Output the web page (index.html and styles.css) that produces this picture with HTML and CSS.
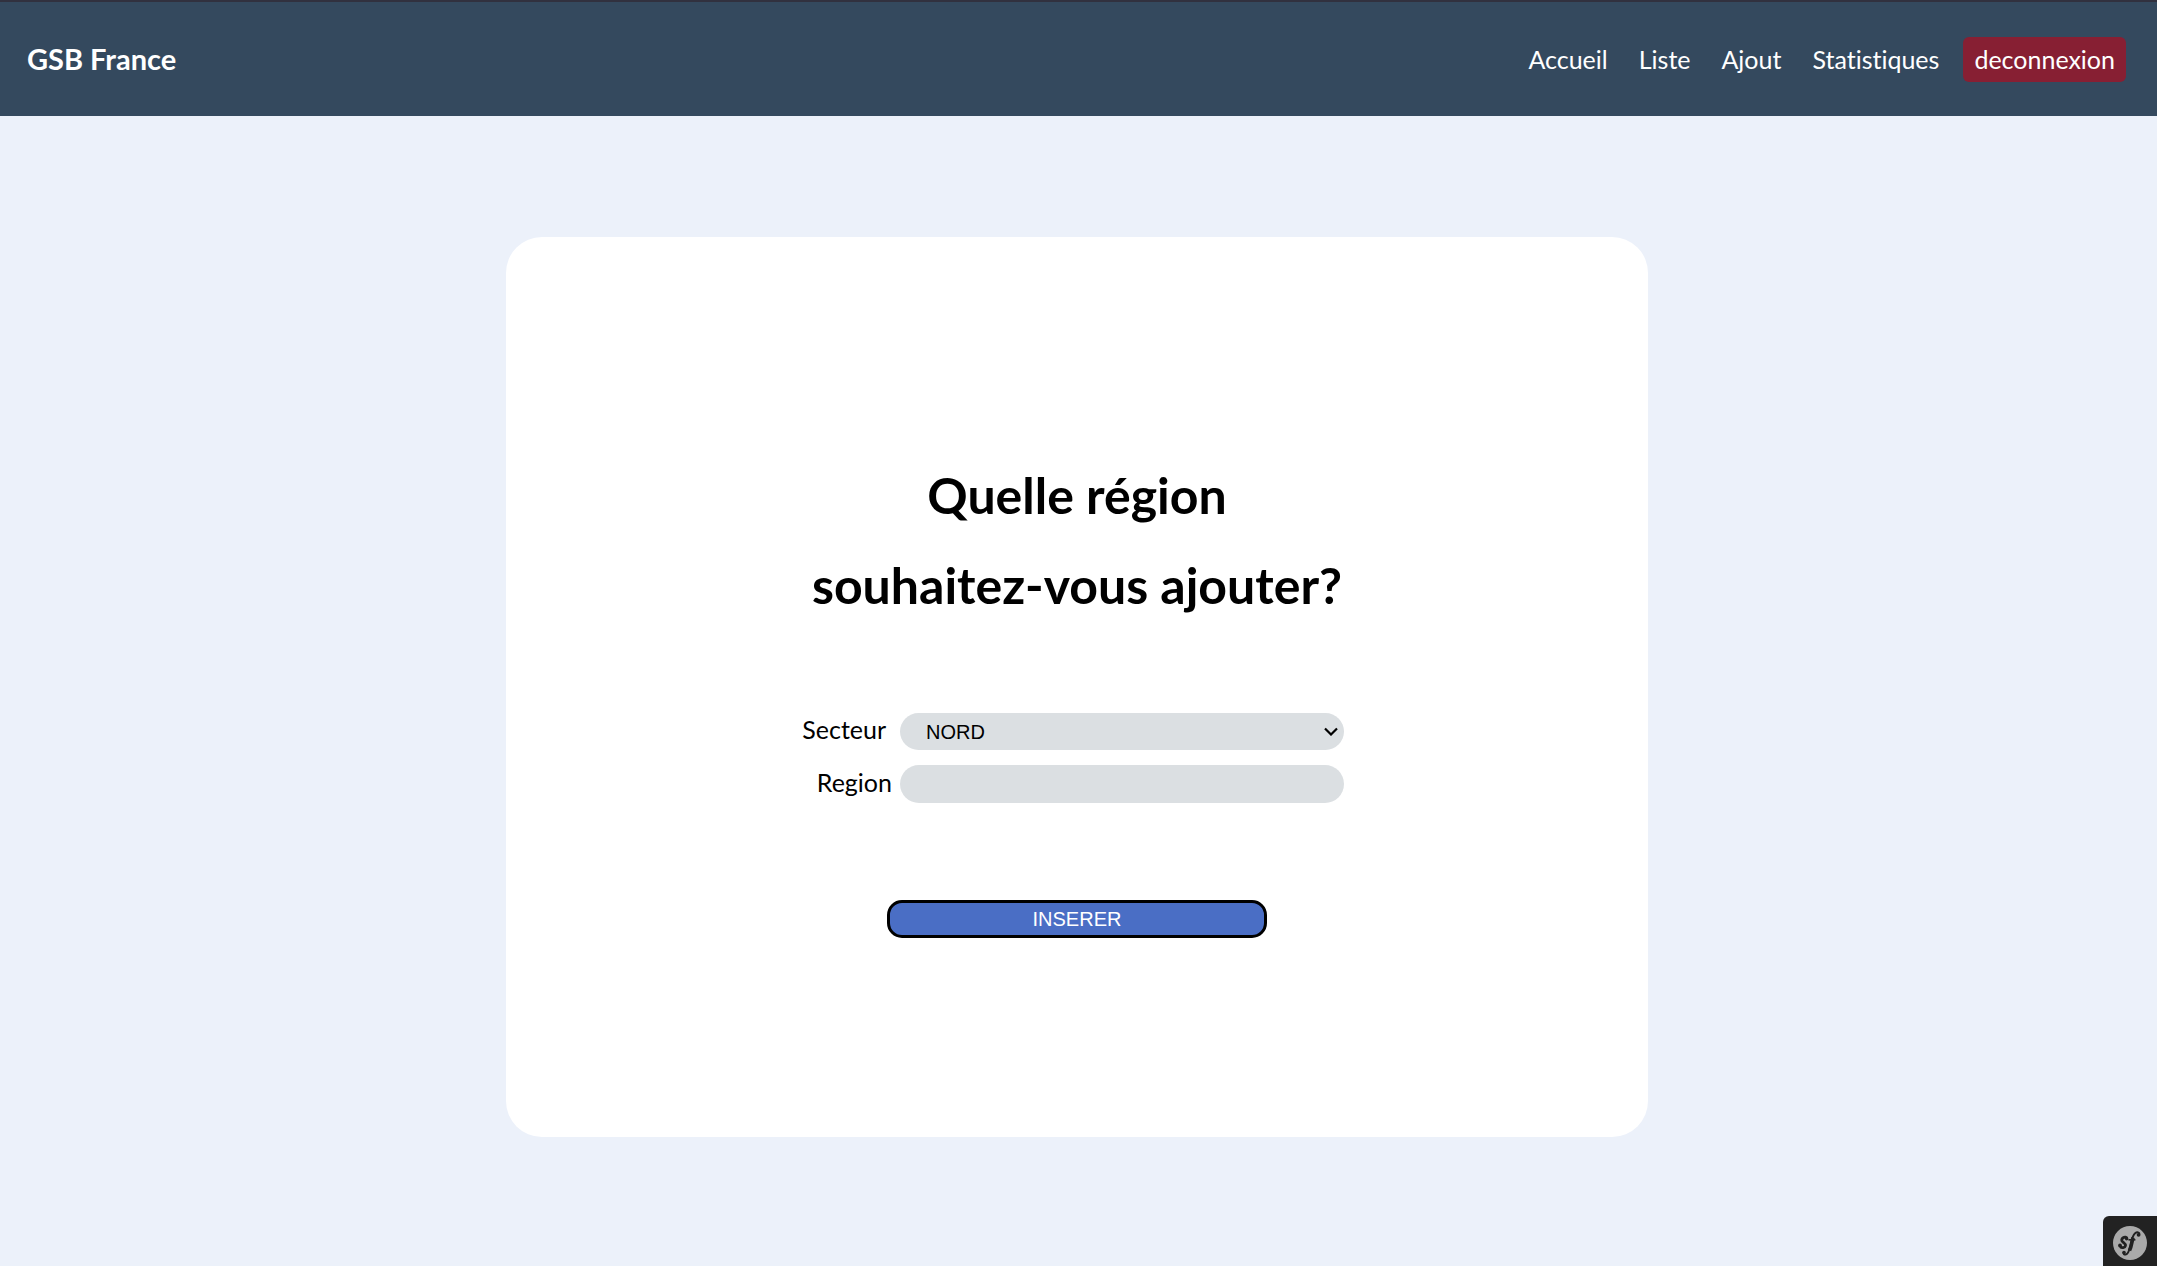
FILE: index.html
```html
<!DOCTYPE html>
<html lang="fr">
<head>
<meta charset="utf-8">
<meta name="viewport" content="width=device-width, initial-scale=1">
<title>GSB France</title>
<link rel="stylesheet" href="styles.css">
</head>
<body>
<header class="topbar">
  <a class="brand" href="#">GSB France</a>
  <nav class="menu">
    <a class="menu-link" href="#">Accueil</a>
    <a class="menu-link" href="#">Liste</a>
    <a class="menu-link" href="#">Ajout</a>
    <a class="menu-link" href="#">Statistiques</a>
    <a class="logout" href="#">deconnexion</a>
  </nav>
</header>
<main class="page">
  <form class="card">
    <h1 class="title">Quelle région<br>souhaitez-vous ajouter?</h1>
    <div class="fields">
      <label class="label" for="secteur">Secteur&nbsp;</label>
      <div class="select-wrap">
        <select class="field select" id="secteur">
          <option>NORD</option>
        </select>
        <svg class="chevron" viewBox="0 0 14 9" aria-hidden="true"><path d="M1 1.5l6 6 6-6" fill="none" stroke="#000" stroke-width="2.2"/></svg>
      </div>
      <label class="label" for="region">Region</label>
      <input class="field" id="region" type="text">
    </div>
    <button class="submit" type="submit">INSERER</button>
  </form>
</main>
<button class="debug" type="button" aria-label="Symfony">
  <svg class="debug-logo" viewBox="0 0 34 34" aria-hidden="true">
    <circle cx="17" cy="17" r="17" fill="#aaa"/>
    <path d="M14 12.600c-.4-1.700-2.400-1.800-3.800-.9-1.700 1.100-2 2.900-.6 4.100 1.500 1.300 3.300 2 2.900 3.900-.5 2.200-3.900 2.400-5.200 1" fill="none" stroke="#222" stroke-width="2.800"/>
    <circle cx="13.600" cy="12.800" r="1.700" fill="#222"/>
    <circle cx="7" cy="19.500" r="1.900" fill="#222"/>
    <path d="M26.400 8.200c.2-2-2.300-2.500-4.300-.9-3.200 2.600-3.600 8.500-4.900 13.500-1 4-2.200 7.300-4.500 7.700-1.500.2-2.300-.6-2.200-1.800" fill="none" stroke="#222" stroke-width="2"/>
    <path d="M20 11.500c-1 3.500-1.500 9-3.500 13" fill="none" stroke="#222" stroke-width="3.600"/>
    <circle cx="25.600" cy="8.800" r="1.900" fill="#222"/>
    <circle cx="11" cy="26.600" r="1.800" fill="#222"/>
    <path d="M15.400 13.800h7" stroke="#222" stroke-width="1.600"/>
  </svg>
</button>
</body>
</html>
```
FILE: styles.css
```css
* {
  box-sizing: border-box;
}

body {
  margin: 0;
  min-height: 100vh;
  background: #ecf1fa;
  color: #000;
  font-family: "Lato", sans-serif;
  font-size: 25px;
  font-variant-ligatures: none;
  line-height: 30px;
}

.topbar {
  display: flex;
  align-items: center;
  justify-content: space-between;
  height: 116px;
  padding: 0 31px 0 27px;
  border-top: 2px solid #31313f;
  background: #34495e;
}

.brand {
  color: #fff;
  font-size: 29px;
  font-weight: 700;
  text-decoration: none;
}

.menu {
  display: flex;
  align-items: center;
  gap: 31px;
}

.menu-link,
.logout {
  color: #fff;
  text-decoration: none;
}

.logout {
  margin-left: -7px;
  padding: 7px 11px 8px;
  border-radius: 6px;
  background: #871f33;
}

.page {
  padding: 121px 3px 128px 0;
}

.card {
  display: flex;
  flex-direction: column;
  align-items: center;
  width: 53%;
  margin: 0 auto;
  padding: 213px 24px 199px;
  border-radius: 36px;
  background: #fff;
}

.title {
  margin: 0 0 83px;
  font-size: 50px;
  font-weight: 700;
  line-height: 90px;
  text-align: center;
}

.fields {
  display: grid;
  grid-template-columns: 90px 444px;
  gap: 15px 8px;
  align-items: center;
  margin: 0 8px 97px 0;
}

.label {
  justify-self: end;
  padding-bottom: 5px;
  white-space: nowrap;
}

.select-wrap {
  position: relative;
}

.field {
  display: block;
  width: 100%;
  height: 38px;
  margin: 0;
  padding: 0 26px;
  border: 0;
  border-radius: 19px;
  appearance: none;
  background: #dbdfe2;
  color: #000;
  font-family: "Liberation Sans", Arial, sans-serif;
  font-size: 20px;
}

.select {
  height: 37px;
}

.chevron {
  position: absolute;
  top: 14px;
  right: 6px;
  width: 14px;
  height: 9px;
  pointer-events: none;
}

.submit {
  width: 380px;
  height: 38px;
  padding: 0;
  border: 3px solid #000;
  border-radius: 15px;
  background: #4a6ec5;
  color: #fff;
  font-family: "Liberation Sans", Arial, sans-serif;
  font-size: 20px;
}

.debug {
  position: fixed;
  right: 0;
  bottom: 0;
  display: flex;
  align-items: center;
  justify-content: center;
  width: 54px;
  height: 50px;
  padding: 4px 0 0;
  border: 0;
  border-radius: 6px 0 0;
  background: #222;
}

.debug-logo {
  width: 34px;
  height: 34px;
}
```
